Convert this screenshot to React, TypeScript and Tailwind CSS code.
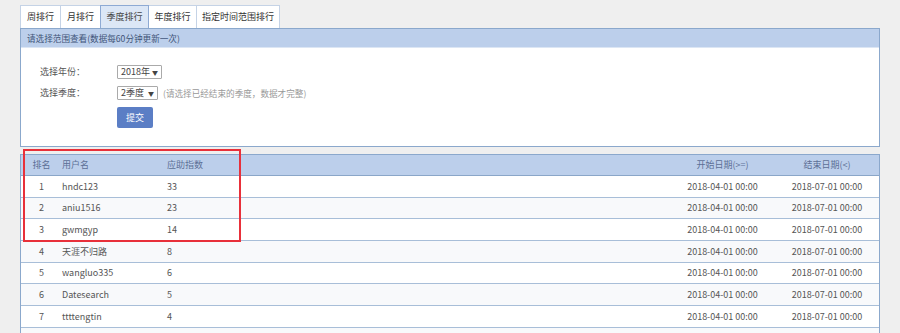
import React from "react";

const rows = [
  ["1", "hndc123", "33"],
  ["2", "aniu1516", "23"],
  ["3", "gwmgyp", "14"],
  ["4", "天涯不归路", "8"],
  ["5", "wangluo335", "6"],
  ["6", "Datesearch", "5"],
  ["7", "ttttengtin", "4"],
];

const tabs = [
  { t: "周排行", w: "w-[41px]" },
  { t: "月排行", w: "w-[41px]" },
  { t: "季度排行", w: "w-[49px]", active: true },
  { t: "年度排行", w: "w-[49px]" },
  { t: "指定时间范围排行", w: "w-[84px]" },
];

export default function App() {
  return (
    <div
      className="relative w-[900px] h-[333px] overflow-hidden bg-[#efefef] text-[9px] text-[#555]"
      style={{ fontFamily: '"Noto Sans CJK SC", "Noto Sans", sans-serif' }}
    >
      <div className="px-[20px] pt-[5px]">
        {/* tabs */}
        <div className="flex h-[23px]">
          {tabs.map((tab, i) => (
            <div
              key={i}
              className={`${tab.w} flex items-center justify-center border border-b-0 -ml-px first:ml-0 ${
                tab.active
                  ? "bg-[#dce7f6] border-[#8eaad4] text-[#444] relative z-10"
                  : "bg-white border-[#c5d3e6] text-[#333]"
              }`}
            >
              {tab.t}
            </div>
          ))}
        </div>

        {/* panel 1 */}
        <div className="border border-[#8ba8cc] bg-white h-[119px]">
          <div className="h-[19px] bg-[#bccfeb] border-b border-[#dce6f4] flex items-center pl-[6px] text-[#3f5478] text-[8.6px]">
            请选择范围查看(数据每60分钟更新一次)
          </div>
          <div className="pt-[17px] pl-[19px] flex flex-col">
            <div className="flex items-center h-[14px]">
              <span className="w-[77px] text-[#555]">选择年份：</span>
              <div className="h-[14px] w-[45px] border border-[#aaa] rounded-[1px] flex items-center justify-between px-[3px] text-[#444]">
                <span>2018年</span>
                <span className="text-[6px]">▼</span>
              </div>
            </div>
            <div className="flex items-center h-[14px] mt-[7px]">
              <span className="w-[77px] text-[#555]">选择季度：</span>
              <div className="h-[14px] w-[41px] border border-[#aaa] rounded-[1px] flex items-center justify-between px-[3px] text-[#444]">
                <span>2季度</span>
                <span className="text-[6px]">▼</span>
              </div>
              <span className="ml-[5px] text-[#999] text-[8.6px]">(请选择已经结束的季度，数据才完整)</span>
            </div>
            <div className="pl-[77px] mt-[7px]">
              <button className="w-[36px] h-[21px] bg-[#5b7ec5] text-white rounded-[2px] text-[9px]">
                提交
              </button>
            </div>
          </div>
        </div>

        {/* table panel */}
        <div className="mt-[7px] border border-[#8ba8cc] bg-white">
          <div className="grid grid-cols-[41px_105px_503px_105px_1fr] h-[21px] items-center bg-[#bccfeb] border-b border-[#8aa6c8] text-[#5c7096]">
            <div className="text-center">排名</div>
            <div>用户名</div>
            <div>应助指数</div>
            <div className="text-center">开始日期(&gt;=)</div>
            <div className="text-center">结束日期(&lt;)</div>
          </div>
          {rows.map((r, i) => (
            <div
              key={i}
              className={`grid grid-cols-[41px_105px_503px_105px_1fr] h-[21.7px] items-center border-b border-[#a8bed8] ${
                i % 2 === 0 ? "bg-white" : "bg-[#f8f9fb]"
              }`}
            >
              <div className="text-center">{r[0]}</div>
              <div>{r[1]}</div>
              <div>{r[2]}</div>
              <div className="text-center">2018-04-01 00:00</div>
              <div className="text-center">2018-07-01 00:00</div>
            </div>
          ))}
          <div className="h-[21.7px] bg-[#f8f9fb]" />
        </div>
      </div>

      {/* red annotation box */}
      <div className="absolute left-[23px] top-[149px] w-[218px] h-[93px] border-2 border-[#e8303a] pointer-events-none" />
    </div>
  );
}
